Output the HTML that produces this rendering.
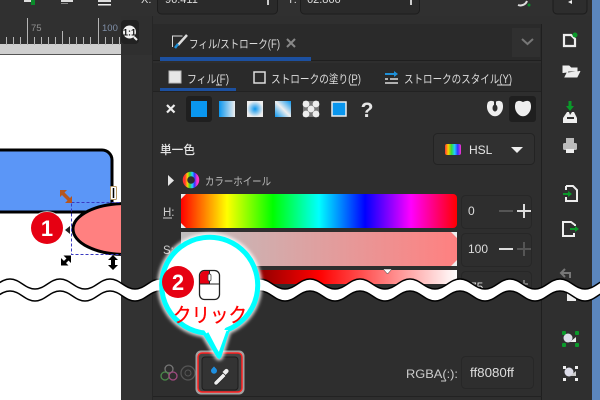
<!DOCTYPE html>
<html lang="ja"><head><meta charset="utf-8"><style>
html,body{margin:0;padding:0;width:600px;height:400px;overflow:hidden;background:#2f2f2f}
svg{display:block}
text{font-family:"Liberation Sans","Noto Sans CJK JP",sans-serif}
</style></head><body>
<svg width="600" height="400" viewBox="0 0 600 400" xmlns="http://www.w3.org/2000/svg">
<defs>
<linearGradient id="h"><stop offset="0" stop-color="#f00"/><stop offset=".1667" stop-color="#ff0"/><stop offset=".333" stop-color="#0f0"/><stop offset=".5" stop-color="#0ff"/><stop offset=".667" stop-color="#00f"/><stop offset=".833" stop-color="#f0f"/><stop offset="1" stop-color="#f00"/></linearGradient>
<linearGradient id="s"><stop offset="0" stop-color="#bfbfbf"/><stop offset="1" stop-color="#ff8080"/></linearGradient>
<linearGradient id="l"><stop offset="0" stop-color="#000"/><stop offset=".5" stop-color="#f00"/><stop offset="1" stop-color="#fff"/></linearGradient>
<linearGradient id="g1"><stop offset="0" stop-color="#0a96ee"/><stop offset="1" stop-color="#eee"/></linearGradient>
<linearGradient id="g3" x1="0" y1="1" x2="1" y2="0"><stop offset="0" stop-color="#0a96ee"/><stop offset=".5" stop-color="#eee"/><stop offset="1" stop-color="#0a96ee"/></linearGradient>
<radialGradient id="g2"><stop offset="0" stop-color="#0a96ee"/><stop offset="1" stop-color="#eee"/></radialGradient>
<linearGradient id="hs"><stop offset="0" stop-color="#f33"/><stop offset=".2" stop-color="#fc0"/><stop offset=".4" stop-color="#3d3"/><stop offset=".6" stop-color="#2cf"/><stop offset=".8" stop-color="#33f"/><stop offset="1" stop-color="#f3c"/></linearGradient>
<filter id="gl" x="-20%" y="-20%" width="140%" height="140%"><feGaussianBlur stdDeviation="1.5"/></filter>
<clipPath id="cv"><rect x="0" y="55" width="121" height="225"/></clipPath>
</defs>

<!-- base -->
<rect width="600" height="400" fill="#2f2f2f"/>
<rect x="0" y="0" width="600" height="16" fill="#303030"/>
<rect x="592" y="0" width="8" height="400" fill="#5b86bd"/>

<!-- top toolbar remnants -->
<rect x="24" y="0" width="10" height="2" fill="#ddd"/>
<rect x="31" y="0" width="4" height="5" fill="#0a8a2a"/>
<rect x="61" y="0" width="12" height="2" fill="#ddd"/><rect x="61" y="3" width="7" height="1" fill="#888"/>
<rect x="98" y="0" width="13" height="2" fill="#ddd"/><rect x="98" y="4" width="13" height="1.500" fill="#eee"/>
<text x="141" y="3" fill="#ddd" font-size="11">X:</text>
<rect x="157.500" y="-8" width="120" height="22" rx="4" fill="#2a2a2a" stroke="#1d1d1d"/>
<text x="165" y="3" fill="#ddd" font-size="11">96.411</text>
<rect x="267" y="-1" width="2" height="6" fill="#ccc"/>
<text x="287" y="3" fill="#ddd" font-size="11">Y:</text>
<rect x="300.500" y="-8" width="119" height="22" rx="4" fill="#2a2a2a" stroke="#1d1d1d"/>
<text x="307" y="3" fill="#ddd" font-size="11">62.866</text>
<rect x="410" y="-1" width="2" height="6" fill="#ccc"/>
<path d="M527 1a7 7 0 0 1-9 4" fill="none" stroke="#ddd" stroke-width="2"/><circle cx="529" cy="5" r="1.500" fill="#0a8a2a"/>
<rect x="553" y="-8" width="34" height="22" rx="4" fill="#2d2d2d" stroke="#1c1c1c"/>
<path d="M572 0l-4 2 4 2z" fill="#eee"/>

<!-- ruler -->
<rect x="0" y="16" width="121" height="29" fill="#303030"/>
<rect x="0" y="44" width="121" height="10" fill="#cfcfcf"/>
<rect x="0" y="54" width="121" height="1" fill="#555"/>
<g stroke="#b5b5b5" stroke-width="1">
<path d="M27.500 18V45M98.500 18V45"/>
<path d="M6.500 37V45M13.500 37V45M20.500 37V45M34.500 37V45M41.500 37V45M48.500 37V45M55.500 37V45M62.500 31V45M69.500 37V45M76.500 37V45M83.500 37V45M90.500 37V45M105.500 37V45M112.500 37V45M119.500 37V45"/>
</g>
<text x="31" y="31" fill="#8f8f8f" font-size="9.500">75</text>
<text x="102" y="31" fill="#7f8fa8" font-size="9.500">100</text>

<!-- canvas -->
<rect x="0" y="55" width="121" height="345" fill="#fff"/>
<g clip-path="url(#cv)">
<rect x="-20" y="150" width="132" height="62" rx="10" fill="#5b96f7" stroke="#000" stroke-width="3"/>
<ellipse cx="125" cy="229" rx="52" ry="25.500" fill="#ff8080" stroke="#000" stroke-width="3"/>
<rect x="71.500" y="202.500" width="70" height="52" fill="none" stroke="#3a3ac0" stroke-width="1" stroke-dasharray="3 2"/>
</g>
<!-- orange skew handle -->
<path d="M63 193.500L69 199.500" stroke="#b5561f" stroke-width="3.500"/>
<path d="M60 190h7l-7 7zM72 203h-7l7-7z" fill="#b5561f"/>
<rect x="110.500" y="186.500" width="6" height="13" rx="1" fill="#fff" stroke="#b89a66"/>
<path d="M113.500 188v10" stroke="#000" stroke-width="1.500"/>
<path d="M65 230l5 4v-8z" fill="#222"/>
<!-- resize handles -->
<path d="M64 263L69 258" stroke="#000" stroke-width="3"/>
<path d="M71 255.500h-7.500l7.500 7.500zM61 265.500h7.500l-7.500-7.500z" fill="#000"/>
<path d="M113 255l5 5h-3v5h3l-5 5-5-5h3v-5h-3z" fill="#000"/>

<!-- 1 badge -->
<circle cx="47" cy="228" r="17" fill="#fff" opacity=".7"/>
<circle cx="47" cy="228" r="16" fill="#e60012"/>
<text x="47" y="236" fill="#fff" font-size="22" font-weight="bold" text-anchor="middle">1</text>

<!-- 1:1 button -->
<rect x="121" y="20" width="18" height="24" rx="4" fill="#222"/>
<circle cx="129.500" cy="32" r="6.500" fill="#f2f2f2"/>
<path d="M134 37l3 3" stroke="#f2f2f2" stroke-width="2"/>
<text x="129.500" y="35.500" fill="#111" font-size="9" font-weight="bold" text-anchor="middle">1:1</text>

<!-- panel -->
<rect x="121" y="55" width="31" height="345" fill="#323232"/>
<rect x="152" y="16" width="1" height="384" fill="#262626"/>
<rect x="153" y="24" width="389" height="376" fill="#2e2e2e"/>
<rect x="153" y="24" width="389" height="36" fill="#2a2a2a"/>
<rect x="153" y="60" width="389" height="1" fill="#1f1f1f"/>
<rect x="160" y="57" width="151" height="4" fill="#1c50a0"/>
<rect x="153" y="63" width="389" height="28" fill="#2a2a2a"/>
<rect x="153" y="91" width="389" height="1" fill="#222"/>
<rect x="160" y="88" width="76" height="3" fill="#1c50a0"/>
<rect x="541" y="24" width="1" height="376" fill="#1f1f1f"/>
<rect x="153" y="396" width="389" height="1" fill="#222"/>

<!-- tab -->
<path d="M172.500 47V36h10" fill="none" stroke="#ddd" stroke-width="1"/>
<path d="M187 35l-9 10" stroke="#ddd" stroke-width="2.500"/><path d="M178 44l-3 4" stroke="#1e90d8" stroke-width="2.500"/>
<text x="189" y="48" fill="#ddd" font-size="11.500" textLength="91" lengthAdjust="spacingAndGlyphs">フィル/ストローク(F)</text>
<path d="M287 39l8 8M295 39l-8 8" stroke="#888" stroke-width="2"/>
<rect x="512" y="28" width="28" height="29" fill="#303030"/>
<path d="M522 39l5.500 5 5.500-5" fill="none" stroke="#777" stroke-width="2"/>

<!-- sub tabs -->
<rect x="169" y="71" width="12" height="12" fill="#e6e6e6" stroke="#bbb"/>
<text x="187" y="83" fill="#ddd" font-size="11.500" textLength="42" lengthAdjust="spacingAndGlyphs">フィル(F)</text>
<path d="M216 85h6" stroke="#ddd"/>
<rect x="254" y="72" width="11" height="11" fill="none" stroke="#ddd" stroke-width="1.500"/>
<text x="271" y="83" fill="#ddd" font-size="11.500" textLength="90" lengthAdjust="spacingAndGlyphs">ストロークの塗り(P)</text>
<path d="M350 85h7" stroke="#ddd"/>
<path d="M385 74h11" stroke="#1e90d8" stroke-width="2"/><path d="M394 71l4 3-4 3z" fill="#1e90d8"/>
<path d="M385 79h3M390 79h8M385 83h13" stroke="#ddd" stroke-width="1.500"/>
<text x="404" y="83" fill="#ddd" font-size="11.500" textLength="108" lengthAdjust="spacingAndGlyphs">ストロークのスタイル(Y)</text>
<path d="M497 85h14" stroke="#ddd"/>

<!-- paint buttons -->
<path d="M167 105l7.500 7.500M174.500 105l-7.500 7.500" stroke="#eee" stroke-width="2.200"/>
<rect x="186" y="96" width="26" height="26" rx="3" fill="#1f1f1f"/>
<rect x="191" y="101" width="16" height="16" fill="#0a96ee"/>
<rect x="219" y="101" width="16" height="16" fill="url(#g1)"/>
<rect x="247" y="101" width="16" height="16" fill="url(#g2)"/>
<rect x="275" y="101" width="16" height="16" fill="url(#g3)"/>
<rect x="303" y="101" width="16" height="16" fill="#777"/>
<g fill="#eee"><circle cx="306" cy="104" r="3.400"/><circle cx="316" cy="104" r="3.400"/><circle cx="311" cy="109" r="3.400"/><circle cx="306" cy="114" r="3.400"/><circle cx="316" cy="114" r="3.400"/></g>
<rect x="332" y="102" width="14" height="14" fill="#0a96ee" stroke="#eee" stroke-width="1.500"/>
<text x="367" y="117" fill="#e6e6e6" font-size="21" font-weight="bold" text-anchor="middle">?</text>
<path d="M488 102c3-2 5-1 7 0 2-1 4-2 7 0 2 4 1 9-2 12-3 3-7 3-10 0-3-3-4-8-2-12z" fill="#eee"/>
<path d="M495 101v5" stroke="#2e2e2e" stroke-width="2"/>
<ellipse cx="495" cy="108" rx="2.500" ry="3.500" fill="#2e2e2e"/>
<rect x="509" y="96" width="27" height="26" rx="3" fill="#1f1f1f"/>
<path d="M516 102c3-2 5-1 7 0 2-1 5-2 7 0 2 4 1 9-2 12-3 3-7 3-10 0-3-3-4-8-2-12z" fill="#eee"/>

<!-- flat color row -->
<text x="160" y="154" fill="#e6e6e6" font-size="12" font-weight="500" textLength="35" lengthAdjust="spacingAndGlyphs">単一色</text>
<rect x="433.500" y="133.500" width="101" height="31" rx="4" fill="#303030" stroke="#232323"/>
<rect x="445" y="144" width="16" height="11" rx="2" fill="url(#hs)"/>
<text x="469" y="154" fill="#e6e6e6" font-size="12">HSL</text>
<path d="M511 147h12l-6 6z" fill="#eee"/>

<!-- color wheel -->
<path d="M168 175l6 5.500-6 5.500z" fill="#e6e6e6"/>
<circle cx="191" cy="180" r="6" fill="none" stroke="url(#hs)" stroke-width="4.500"/>
<text x="205" y="185" fill="#bbb" font-size="11" textLength="66" lengthAdjust="spacingAndGlyphs">カラーホイール</text>

<!-- sliders -->
<text x="163" y="216" fill="#ccc" font-size="11.500">H:</text>
<path d="M163 218h9" stroke="#ccc"/>
<rect x="181" y="194" width="276" height="34" rx="4" fill="url(#h)"/>
<path d="M181 194h5l-5 5zM181 228h5l-5-5z" fill="#eee"/>
<text x="163" y="254" fill="#ccc" font-size="11.500">S:</text>
<rect x="181" y="232" width="276" height="34" fill="url(#s)"/>
<path d="M457 232v6l-6-6zM457 266v-6l-6 6z" fill="#eee"/>
<rect x="181" y="270" width="276" height="14" fill="url(#l)"/>
<path d="M383 269h9l-4.500 5z" fill="#fff" stroke="#222" stroke-width=".5"/>

<!-- number fields -->
<rect x="461.500" y="195.500" width="70" height="33" rx="4" fill="#2e2e2e" stroke="#272727"/>
<text x="468" y="215" fill="#ddd" font-size="12">0</text>
<path d="M499 211h14" stroke="#555" stroke-width="2"/><path d="M517 211h14M524 204v14" stroke="#ddd" stroke-width="2"/>
<rect x="461.500" y="233.500" width="70" height="33" rx="4" fill="#2e2e2e" stroke="#272727"/>
<text x="468" y="253" fill="#ddd" font-size="12">100</text>
<path d="M499 249h14" stroke="#ddd" stroke-width="2"/><path d="M517 249h14M524 242v14" stroke="#555" stroke-width="2"/>
<rect x="461.500" y="271.500" width="70" height="20" rx="4" fill="#2e2e2e" stroke="#272727"/>
<text x="470" y="291" fill="#ddd" font-size="12">75</text>
<path d="M524 280v8M520 284h8" stroke="#777" stroke-width="2"/>

<!-- right toolbar -->
<g fill="none" stroke="#eee" stroke-width="2">
<path d="M564 35h7l4 4v7h-11z" stroke-width="2.200"/>
<path d="M566 186h7l4 4v11h-11v-4"/>
<path d="M566 190v-4M575 226v-1l-4-3h-8v14h11v-3" />
<path d="M565 269l-4 4 4 4M561 273h9v5" stroke="#777"/>
</g>
<circle cx="575" cy="35" r="2.500" fill="#0a9a2a"/>
<path d="M563 73v-7h6l2 2h6v3h-9l-3 6h12l3-6" fill="#eee" stroke="#eee"/>
<path d="M570 101v6" stroke="#0a9a2a" stroke-width="3"/><path d="M566 106h8l-4 5z" fill="#0a9a2a"/>
<path d="M563 118l4-6h2l1 3 2-3h2l3 6v5h-14z" fill="#eee"/><rect x="567" y="117" width="7" height="2" fill="#333"/>
<path d="M566 138h8v5h-8z" fill="#bbb"/><rect x="563" y="143" width="14" height="7" rx="1.500" fill="#bbb"/><rect x="566" y="149" width="8" height="4" fill="#eee"/>
<path d="M563 194h7" stroke="#0a9a2a" stroke-width="2"/><path d="M568 191l4 3-4 3z" fill="#0a9a2a"/>
<path d="M570 229h7" stroke="#0a9a2a" stroke-width="2"/><path d="M575 226l4 3-4 3z" fill="#0a9a2a"/>
<rect x="567" y="292" width="9" height="9" fill="#eee"/>
<g fill="#0a9a2a"><rect x="562" y="331" width="4" height="4" rx="1"/><rect x="575" y="331" width="4" height="4" rx="1"/><rect x="562" y="343" width="4" height="4" rx="1"/><rect x="575" y="343" width="4" height="4" rx="1"/></g>
<circle cx="568" cy="338" r="4.500" fill="#dcdce8"/><path d="M569 341h6v-5z" fill="#eee" transform="translate(1 1)"/>
<g fill="#eee"><rect x="563" y="366" width="3" height="3"/><rect x="575" y="366" width="3" height="3"/><rect x="563" y="378" width="3" height="3"/><rect x="575" y="378" width="3" height="3"/></g>
<circle cx="569" cy="372" r="4.500" fill="#dcdce8"/><path d="M570 376h6v-5z" fill="#ccc"/>

<!-- wave tear -->
<path d="M-15 289C-5 289 0 279 10 279S25 289 35 289S50 279 60 279S75 289 85 289S100 279 110 279S125 289 135 289S150 279 160 279S175 289 185 289S200 279 210 279S225 289 235 289S250 279 260 279S275 289 285 289S300 279 310 279S325 289 335 289S350 279 360 279S375 289 385 289S400 279 410 279S425 289 435 289S450 279 460 279S475 289 485 289S500 279 510 279S525 289 535 289S550 279 560 279S575 289 585 289S600 279 610 279V291C600 291 595 301 585 301S570 291 560 291S545 301 535 301S520 291 510 291S495 301 485 301S470 291 460 291S445 301 435 301S420 291 410 291S395 301 385 301S370 291 360 291S345 301 335 301S320 291 310 291S295 301 285 301S270 291 260 291S245 301 235 301S220 291 210 291S195 301 185 301S170 291 160 291S145 301 135 301S120 291 110 291S95 301 85 301S70 291 60 291S45 301 35 301S20 291 10 291S-5 301 -15 301Z" fill="#fff"/>
<path d="M-15 289C-5 289 0 279 10 279S25 289 35 289S50 279 60 279S75 289 85 289S100 279 110 279S125 289 135 289S150 279 160 279S175 289 185 289S200 279 210 279S225 289 235 289S250 279 260 279S275 289 285 289S300 279 310 279S325 289 335 289S350 279 360 279S375 289 385 289S400 279 410 279S425 289 435 289S450 279 460 279S475 289 485 289S500 279 510 279S525 289 535 289S550 279 560 279S575 289 585 289S600 279 610 279" fill="none" stroke="#000" stroke-width="1.500"/>
<path d="M-15 301C-5 301 0 291 10 291S25 301 35 301S50 291 60 291S75 301 85 301S100 291 110 291S125 301 135 301S150 291 160 291S175 301 185 301S200 291 210 291S225 301 235 301S250 291 260 291S275 301 285 301S300 291 310 291S325 301 335 301S350 291 360 291S375 301 385 301S400 291 410 291S425 301 435 301S450 291 460 291S475 301 485 301S500 291 510 291S525 301 535 301S550 291 560 291S575 301 585 301S600 291 610 291" fill="none" stroke="#000" stroke-width="1.500"/>

<!-- bottom -->
<g fill="none" stroke-width="1.300"><circle cx="169" cy="369" r="4" stroke="#777"/><circle cx="165" cy="376" r="4" stroke="#4a8a4a"/><circle cx="173" cy="376" r="4" stroke="#a04a80"/></g>
<circle cx="188" cy="373" r="7" fill="none" stroke="#555" stroke-width="1.300"/><circle cx="188" cy="373" r="3" fill="none" stroke="#555"/>
<text x="406" y="378" fill="#ccc" font-size="12" textLength="52" lengthAdjust="spacingAndGlyphs">RGBA(:):</text>
<path d="M441 381h5" stroke="#ccc"/>
<rect x="461.500" y="356.500" width="72" height="32" rx="4" fill="#2e2e2e" stroke="#272727"/>
<text x="470" y="377" fill="#ddd" font-size="12.500" textLength="44" lengthAdjust="spacingAndGlyphs">ff8080ff</text>

<!-- eyedropper button -->
<rect x="197" y="352" width="46" height="41" rx="4" fill="#444" stroke="#fff" stroke-opacity=".55" stroke-width="3"/>
<rect x="198" y="353" width="44" height="39" rx="4" fill="none" stroke="#ff2020" stroke-width="1.500"/>
<rect x="202" y="357" width="36" height="33" rx="3" fill="#333" stroke="#1c1c1c"/>
<path d="M214 366.500c1.500 1.500 3 2.800 3 4.200a3 3 0 0 1-6 0c0-1.400 1.500-2.700 3-4.200z" fill="#1e8fe0"/>
<path d="M215 385l-1-1 0-2 9-9 3 3-9 9z" fill="#eee" stroke="#222" stroke-width=".7"/>
<path d="M222.500 372l2.500-2.500c2-1.800 4.800 1 3 3l-2.500 2.500z" fill="#eee"/>

<!-- bubble -->
<path d="M227 330A48 48 0 1 0 205 333L219 356Z" fill="none" stroke="#fff" stroke-width="9" stroke-opacity=".8" stroke-linejoin="round" filter="url(#gl)"/>
<path d="M227 330A48 48 0 1 0 205 333L219 356Z" fill="#fff" stroke="#0ff" stroke-width="5" stroke-linejoin="round"/>
<path d="M204 330h24l-9 22z" fill="#fff"/>
<path d="M207 333L219 356L228 331" fill="none" stroke="#0ff" stroke-width="3"/>

<!-- 2 badge -->
<circle cx="178" cy="282" r="16" fill="#e60012"/>
<text x="178" y="290" fill="#fff" font-size="22" font-weight="bold" text-anchor="middle">2</text>

<!-- mouse -->
<rect x="199.500" y="270.500" width="20" height="29" rx="5" fill="#fff" stroke="#222" stroke-width="1.300"/>
<path d="M200 284v-8c0-3 2-5 5-5h4v13z" fill="#e60012"/>
<path d="M200 284h19M209.500 271v13" stroke="#222" stroke-width="1"/>
<rect x="208" y="274" width="3" height="7" rx="1.500" fill="#fff" stroke="#444" stroke-width=".8"/>

<!-- click -->
<text x="173" y="322" fill="#f00" font-size="20" stroke="#f00" stroke-width=".3" textLength="74" lengthAdjust="spacingAndGlyphs">クリック</text>
</svg>
</body></html>
